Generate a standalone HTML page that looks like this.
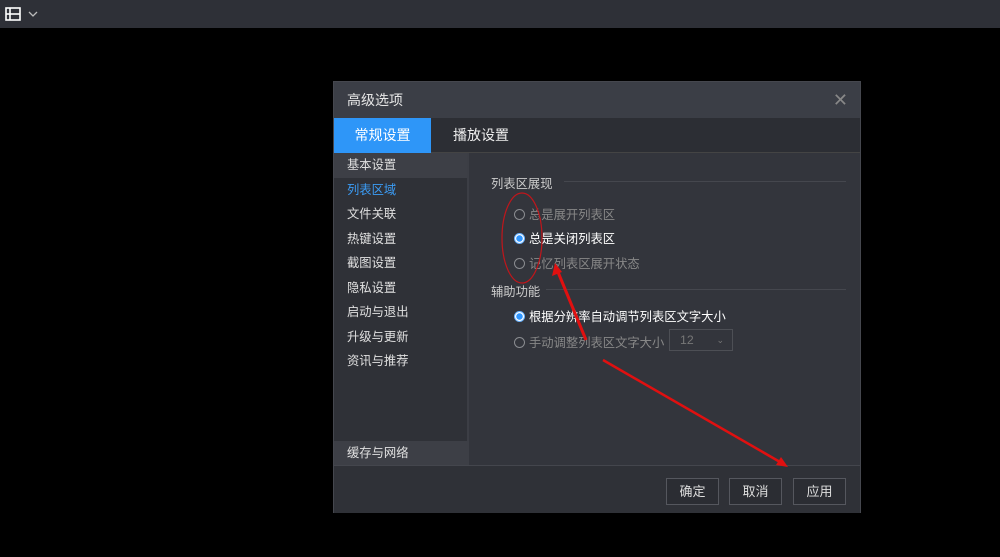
<!DOCTYPE html><html><head><meta charset="utf-8"><style>
*{margin:0;padding:0;box-sizing:border-box}
body{width:1000px;height:557px;background:#000;position:relative;overflow:hidden;font-family:"Liberation Sans","Noto Sans CJK SC",sans-serif;font-size:12.3px;color:#ddd}
.a{position:absolute}
.top{left:0;top:0;width:1000px;height:28px;background:#2e3037}
.dlg{left:333px;top:81px;width:528px;height:432px;background:#33353c;border:1px solid #45474e}
.title{left:0;top:0;width:526px;height:36px;background:#3b3e46;font-size:14px;line-height:36px;padding-left:13px;color:#e6e6e6}
.tabs{left:0;top:36px;width:526px;height:35px;background:#2c2e34;border-bottom:1px solid #444}
.side{left:0;top:71px;width:135px;height:312px;background:#2f3137;border-right:2px solid #3c3e45}
.side div{height:24.5px;line-height:24px;padding-left:13px;color:#e0e0e0}
.footer{left:0;top:383px;width:526px;height:48px;background:#2f3137;border-top:1px solid #44464d}
.btn{top:12px;width:53px;height:27px;border:1px solid #55575e;background:#2b2d33;text-align:center;line-height:25px;color:#ddd;font-size:13px}
.r{width:11px;height:11px;border-radius:50%;border:1px solid #8a8c90;display:inline-block;vertical-align:-1px;margin-right:4px}
.r.on{border-color:#6cb4ff;background:radial-gradient(circle,#2e95ff 0 3px,#fff 3.5px)}
</style></head><body>
<div class="a top"><svg class="a" style="left:5px;top:7px" width="16" height="14" viewBox="0 0 16 14"><rect x="1" y="1" width="14" height="12" fill="none" stroke="#fff" stroke-width="1.6"/><line x1="5" y1="1" x2="5" y2="13" stroke="#fff" stroke-width="1.6"/><line x1="1" y1="7" x2="15" y2="7" stroke="#fff" stroke-width="1.6"/></svg><svg class="a" style="left:28px;top:11px" width="10" height="6"><path d="M1 1l4 4 4-4" fill="none" stroke="#bbb" stroke-width="1.3"/></svg></div>
<div class="a dlg">
<div class="a title">高级选项<span class="a" style="right:12px;top:0;color:#888;font-size:18px">✕</span></div>
<div class="a tabs"><div class="a" style="left:0;top:0;width:97px;height:35px;background:#2e96f8;color:#fff;text-align:center;line-height:35px;font-size:14px">常规设置</div><div class="a" style="left:119px;top:0;line-height:35px;font-size:14px;color:#eee">播放设置</div></div>
<div class="a side"><div style="background:#3d3f46">基本设置</div><div style="color:#3b9cf5">列表区域</div><div>文件关联</div><div>热键设置</div><div>截图设置</div><div>隐私设置</div><div>启动与退出</div><div>升级与更新</div><div>资讯与推荐</div><div class="a" style="left:0;top:288px;width:135px;background:#3d3f46">缓存与网络</div></div>
<div class="a" style="left:157px;top:92px;color:#ccc">列表区展现</div><div class="a" style="left:230px;top:99px;width:282px;height:1px;background:#45474e"></div>
<div class="a" style="left:180px;top:123px;color:#888"><span class="r"></span>总是展开列表区</div>
<div class="a" style="left:180px;top:147px;color:#fff"><span class="r on"></span>总是关闭列表区</div>
<div class="a" style="left:180px;top:172px;color:#888"><span class="r"></span>记忆列表区展开状态</div>
<div class="a" style="left:157px;top:200px;color:#ccc">辅助功能</div><div class="a" style="left:212px;top:207px;width:300px;height:1px;background:#45474e"></div>
<div class="a" style="left:180px;top:225px;color:#fff"><span class="r on"></span>根据分辨率自动调节列表区文字大小</div>
<div class="a" style="left:180px;top:251px;color:#888"><span class="r"></span>手动调整列表区文字大小</div>
<div class="a" style="left:335px;top:247px;width:64px;height:22px;border:1px solid #4d4f55;color:#777;padding-left:10px;line-height:20px">12<span class="a" style="right:8px;top:0;font-size:9px">⌄</span></div>
<div class="a footer"><div class="a btn" style="left:332px">确定</div><div class="a btn" style="left:395px">取消</div><div class="a btn" style="left:459px">应用</div></div>
</div>
<svg class="a" style="left:0;top:0" width="1000" height="557"><ellipse cx="522" cy="238" rx="20" ry="45" fill="none" stroke="#c0161b" stroke-width="1.2"/>
<line x1="586" y1="340" x2="558" y2="272" stroke="#e01010" stroke-width="3"/><path d="M555 263l-3 13 10-4z" fill="#e01010"/>
<line x1="603" y1="360" x2="780" y2="462" stroke="#e01010" stroke-width="2.5"/><path d="M788 467l-12-2 5-8z" fill="#e01010"/></svg>
</body></html>
